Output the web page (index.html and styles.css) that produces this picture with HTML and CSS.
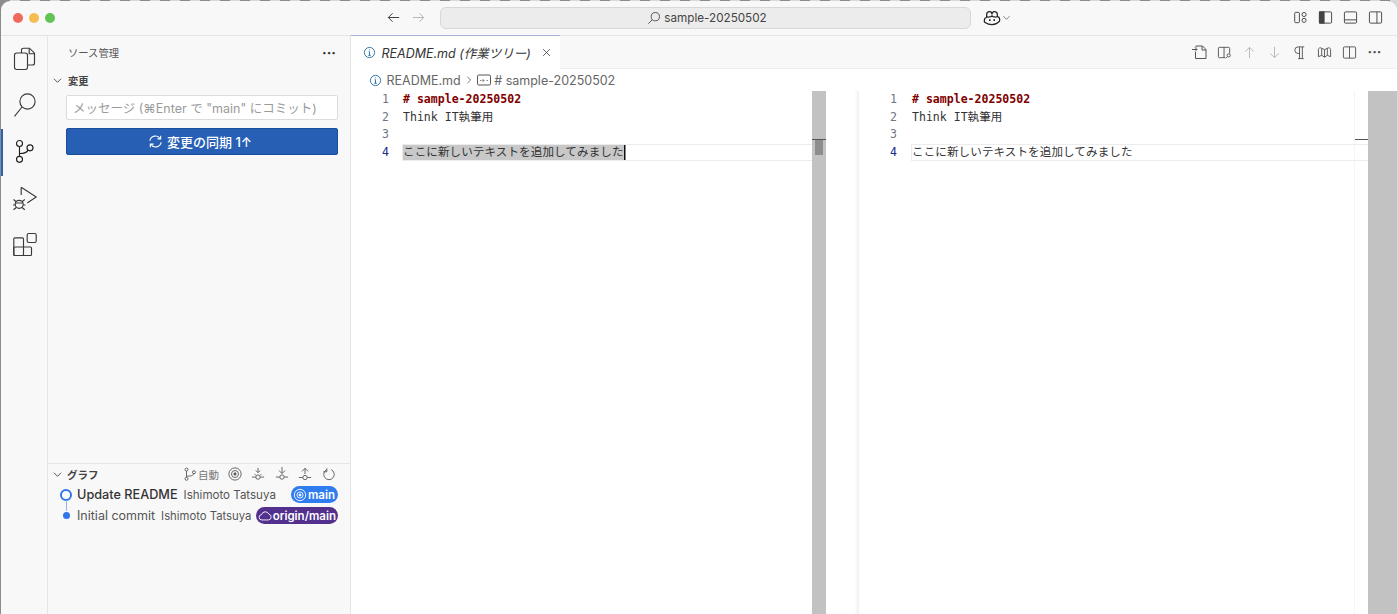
FILE: index.html
```html
<!DOCTYPE html>
<html lang="ja">
<head>
<meta charset="utf-8">
<title>sample-20250502</title>
<link rel="stylesheet" href="styles.css">
</head>
<body>
<div class="window">
  <header class="titlebar">
    <div class="lights"><i class="light red"></i><i class="light yellow"></i><i class="light green"></i></div>
    <div class="nav">
      <svg class="ic16" viewBox="0 0 16 16"><path d="M14 8H2.500M7 3.500 2.500 8 7 12.500"/></svg>
      <svg class="ic16 dim" viewBox="0 0 16 16"><path d="M2 8h11.500M9 3.500 13.500 8 9 12.500"/></svg>
    </div>
    <div class="command">
      <svg class="ic14" viewBox="0 0 16 16"><circle cx="9.500" cy="6.500" r="4.700"/><path d="M6 10 1.500 14.500"/></svg>
      <span>sample-20250502</span>
    </div>
    <div class="copilot">
      <svg class="ic-cop" viewBox="0 0 20 18"><path d="M4 5.200c0-2.200 1.600-3.400 3.300-3.400S10 3 10 5c0-2 1-3.200 2.700-3.200S16 3 16 5.200v2c1.600.6 2.600 1.600 2.600 3v1.600c0 .6-.3 1-.8 1.300C15.500 15.600 12.800 16.500 10 16.500s-5.500-.9-7.800-2.400c-.5-.3-.8-.7-.8-1.300v-1.600c0-1.400 1-2.400 2.600-3Z"/><path d="M4 7.200c1.500 1 4.700 1 6-.7 1.300 1.700 4.500 1.700 6 .7"/><path class="fat" d="M7.500 10.500v2M12.500 10.500v2"/></svg>
      <svg class="chev" viewBox="0 0 10 10"><path d="M1.500 3.500 5 7l3.500-3.500"/></svg>
    </div>
    <div class="layout-icons">
      <svg class="ic16" viewBox="0 0 16 16"><rect x="1.800" y="2.500" width="5" height="11" rx="1"/><circle cx="11.800" cy="4.800" r="2.200"/><circle cx="11.800" cy="11" r="2.200"/></svg>
      <svg class="ic16" viewBox="0 0 16 16"><rect x="1.500" y="2" width="13" height="12" rx="1.200"/><rect class="solid" x="1.500" y="2" width="5" height="12"/></svg>
      <svg class="ic16" viewBox="0 0 16 16"><rect x="1.500" y="2" width="13" height="12" rx="1.200"/><path d="M1.500 10.500h13"/></svg>
      <svg class="ic16" viewBox="0 0 16 16"><rect x="1.500" y="2" width="13" height="12" rx="1.200"/><path d="M9.500 2v12"/></svg>
    </div>
  </header>
  <div class="main">
    <nav class="activity">
      <div class="act">
        <svg viewBox="0 0 24 24"><path d="M9.500 6V3.200c0-1.200.8-2 2-2h6l5 5v9.800c0 1.200-.8 2-2 2h-5.500"/><path d="M17.200 1.500v5.200h5"/><rect x="2.500" y="6" width="13" height="16.500" rx="2.200"/></svg>
      </div>
      <div class="act">
        <svg viewBox="0 0 24 24"><circle cx="15.500" cy="7.500" r="7.600"/><path d="M10 13 2.500 22.300"/></svg>
      </div>
      <div class="act active">
        <svg viewBox="0 0 24 24"><circle cx="7.500" cy="3.500" r="3"/><circle cx="18" cy="7.800" r="3"/><circle cx="7.500" cy="19.300" r="3"/><path d="M7.500 6.500v9.800M7.500 13.500c4 0 7.500-.2 8.500-3.500"/></svg>
      </div>
      <div class="act">
        <svg viewBox="0 0 24 24"><path d="M9.200.3V8M9.200.3 24.200 10l-9 6"/><circle class="bug" cx="7.200" cy="17.300" r="4"/><path d="M1.500 12.500l2.800 2.200M12.800 12.500l-2.800 2.200M1 18h2.200M11.200 18h2.300M1.500 22.800l2.800-2.300M12.800 22.800 10 20.500M3.500 16h7.400"/></svg>
      </div>
      <div class="act">
        <svg viewBox="0 0 24 24"><rect x="1.800" y="4.800" width="9.700" height="17.700" rx="1"/><rect x="1.800" y="14" width="17.700" height="8.500" rx="1"/><rect x="15.200" y=".5" width="9" height="9" rx="1.500"/></svg>
      </div>
    </nav>
    <aside class="sidebar">
      <div class="side-top">
        <div class="side-title"><span>ソース管理</span><b class="dots">···</b></div>
        <div class="section-head"><svg class="chev" viewBox="0 0 10 10"><path d="M1 3l4 4 4-4"/></svg><span>変更</span></div>
        <div class="msg">メッセージ (⌘Enter で "main" にコミット)</div>
        <button class="sync">
          <svg viewBox="0 0 16 16"><path d="M2 7.200A6 6 0 0 1 13 5M14 8.800A6 6 0 0 1 3 11"/><path d="M13.500 1.800V5.200H10M2.500 14.200V10.800H6"/></svg>
          <span>変更の同期 1↑</span>
        </button>
      </div>
      <div class="graph">
        <div class="graph-head">
          <svg class="chev" viewBox="0 0 10 10"><path d="M1 3l4 4 4-4"/></svg>
          <span class="graph-title">グラフ</span>
          <div class="graph-tools">
            <svg class="ic14" viewBox="0 0 16 16"><circle cx="4" cy="3" r="1.700"/><circle cx="4" cy="13.500" r="1.700"/><circle cx="12.500" cy="6" r="1.700"/><path d="M4 4.700v7M4 10.500c4 0 8-.5 8.500-3"/></svg>
            <span class="auto">自動</span>
            <svg class="ic14" viewBox="0 0 16 16"><circle cx="8" cy="8" r="7"/><circle cx="8" cy="8" r="4"/><circle class="solid" cx="8" cy="8" r="1.300"/></svg>
            <svg class="ic14" viewBox="0 0 16 16"><circle cx="8" cy="11.500" r="2.500"/><path d="M1 11.500h4.500M10.500 11.500H15M8 1v5M5.500 4 8 6.500 10.500 4M4 8l1.500 1.500M12 8l-1.500 1.500"/></svg>
            <svg class="ic14" viewBox="0 0 16 16"><circle cx="8" cy="11.500" r="2.500"/><path d="M1 11.500h4.500M10.500 11.500H15M8 0v7M4.500 4 8 7.500 11.500 4"/></svg>
            <svg class="ic14" viewBox="0 0 16 16"><circle cx="8" cy="12" r="2.500"/><path d="M1 12h4.500M10.500 12H15M8 8V1.500M4.500 5 8 1.500 11.500 5"/></svg>
            <svg class="ic14" viewBox="0 0 16 16"><path d="M10.500 2.500a6 6 0 1 1-5 0M5.500 1v4H1.500" transform="translate(0 .5)"/></svg>
          </div>
        </div>
        <div class="commit head">
          <i class="node big"></i>
          <span class="c-msg">Update README</span>
          <span class="c-author">Ishimoto Tatsuya</span>
          <span class="badge blue"><svg viewBox="0 0 16 16"><circle cx="8" cy="8" r="6.500"/><circle cx="8" cy="8" r="3.500"/><circle class="solid" cx="8" cy="8" r="1.200"/></svg>main</span>
        </div>
        <div class="commit">
          <i class="node small"></i>
          <span class="c-msg">Initial commit</span>
          <span class="c-author">Ishimoto Tatsuya</span>
          <span class="badge purple"><svg viewBox="0 0 16 16"><path d="M4.500 12.500a3 3 0 0 1-.5-6 4.500 4.500 0 0 1 8.500-.5 3.300 3.300 0 0 1-.5 6.500Z"/></svg>origin/main</span>
        </div>
      </div>
    </aside>
    <section class="editor-area">
      <div class="tabs">
        <div class="tab">
          <svg class="info" viewBox="0 0 16 16"><circle cx="8" cy="8" r="6.300"/><path d="M8 7v4.500M6.500 11.500h3M7 7h1"/><path class="dotline" d="M8 4.300v.8"/></svg>
          <span>README.md (作業ツリー)</span>
          <svg class="close" viewBox="0 0 12 12"><path d="M1.500 1.500l9 9M10.500 1.500l-9 9"/></svg>
        </div>
        <div class="tab-actions">
          <svg class="ic16 wide16" viewBox="0 0 16 16"><path d="M5 3.500V2h6.500L15 5.500V14.500H4.500V8M11 2v4h4M1 5.500h5l-2-2M6 5.500l-2 2"/></svg>
          <svg class="ic16" viewBox="0 0 16 16"><path d="M9 13.500H2.500a1 1 0 0 1-1-1v-9a1 1 0 0 1 1-1h10a1 1 0 0 1 1 1V9M7.500 2.500v11"/><circle cx="12.500" cy="11" r="1.700"/><path d="M11.200 12.300 9.500 14"/></svg>
          <svg class="ic16 dim" viewBox="0 0 16 16"><path d="M8 14V2.500M3.500 7 8 2.500 12.500 7"/></svg>
          <svg class="ic16 dim" viewBox="0 0 16 16"><path d="M8 2v11.500M3.500 9 8 13.500 12.500 9"/></svg>
          <svg class="ic16" viewBox="0 0 16 16"><path d="M13 2H6.500a3.500 3.500 0 0 0 0 7H8M8 2v12.500M11 2v12.500M6.500 14.500h6"/></svg>
          <svg class="ic16" viewBox="0 0 16 16"><path d="M1.500 5c0-2 2-2.500 3.500-1.500L8 5l3-1.500c1.500-1 3.500-.5 3.500 1.500v7.500L11 11l-3 2-3-2-3.500 1.500ZM5 3.500V11M8 5v8M11 3.500V11"/></svg>
          <svg class="ic16" viewBox="0 0 16 16"><rect x="1.500" y="2" width="13" height="12" rx="1.200"/><path d="M8 2v12"/></svg>
          <b class="dots small">···</b>
        </div>
      </div>
      <div class="breadcrumb">
        <svg class="info" viewBox="0 0 16 16"><circle cx="8" cy="8" r="6.300"/><path d="M8 7v4.500M6.500 11.500h3M7 7h1"/><path class="dotline" d="M8 4.300v.8"/></svg>
        <span>README.md</span>
        <svg class="crumb-sep" viewBox="0 0 10 10"><path d="M3 1l4 4-4 4"/></svg>
        <svg class="abc" viewBox="0 0 14 12"><rect x=".5" y="1" width="13" height="10" rx="1.200"/><path class="fine" d="M3 6.500h1.500M6 5v3M6 6.500h1.500M9.500 6.500h1.500"/></svg>
        <span># sample-20250502</span>
      </div>
      <div class="diff">
        <div class="pane pane-left">
          <div class="code">
            <div class="line"><span class="ln">1</span><span class="tx h1"># sample-20250502</span></div>
            <div class="line"><span class="ln">2</span><span class="tx">Think IT執筆用</span></div>
            <div class="line"><span class="ln">3</span><span class="tx"></span></div>
            <div class="line cur"><span class="ln">4</span><span class="tx"><mark class="sel">ここに新しいテキストを追加してみました</mark></span></div>
          </div>
          <div class="scroll"><i class="ov-line"></i><i class="ov-thumb"></i></div>
        </div>
        <div class="sash"></div>
        <div class="pane pane-right">
          <div class="code">
            <div class="line"><span class="ln">1</span><span class="tx h1"># sample-20250502</span></div>
            <div class="line"><span class="ln">2</span><span class="tx">Think IT執筆用</span></div>
            <div class="line"><span class="ln">3</span><span class="tx"></span></div>
            <div class="line cur"><span class="ln">4</span><span class="tx">ここに新しいテキストを追加してみました</span></div>
          </div>
          <div class="overview"><i class="ov-line"></i></div>
          <div class="scroll wide"></div>
        </div>
      </div>
    </section>
  </div>
</div>
</body>
</html>
```
FILE: styles.css
```css
* { box-sizing: border-box; }
html, body { margin: 0; height: 100%; overflow: hidden; }
body {
  background: repeating-linear-gradient(90deg, #8c8c8c 0 10px, #d8d8d8 10px 20px);
  padding: 1px 1.500px 0 1px;
  font-family: Inter, "Noto Sans CJK JP", sans-serif;
  color: #3b3b3b;
}
svg { fill: none; stroke: currentColor; stroke-width: 1; flex: none; display: block; overflow: visible; }
svg .solid { fill: currentColor; }
.window {
  height: 613px;
  background: #f8f8f8;
  border-radius: 9px 9px 0 0;
  overflow: hidden;
  display: flex;
  flex-direction: column;
}
.titlebar {
  height: 35px;
  flex: none;
  display: flex;
  align-items: center;
  border-bottom: 1px solid #e5e5e5;
  padding: 0 0 1px 12px;
}
.lights { display: flex; gap: 6px; width: 373px; flex: none; }
.light { width: 10px; height: 10px; border-radius: 50%; }
.red { background: #ee6a5f; }
.yellow { background: #f5bd4f; }
.green { background: #61c454; }
.nav { display: flex; gap: 10px; width: 54px; flex: none; color: #333; }
.ic16 { width: 15px; height: 15px; }
.ic14 { width: 14px; height: 14px; }
.dim { color: #b3b3b3; }
.command {
  width: 531px;
  height: 22px;
  flex: none;
  border: 1px solid #d8d8d8;
  border-radius: 6px;
  background: #ececec;
  display: flex;
  align-items: center;
  justify-content: center;
  gap: 3px;
  font-size: 11.700px;
  color: #444;
  padding-left: 3px;
}
.copilot { margin-left: 12px; display: flex; align-items: center; gap: 1px; color: #222; }
.ic-cop { width: 18px; height: 16px; stroke-width: 1.400; }
.ic-cop .fat { stroke-width: 1.800; }
.copilot .chev { width: 9px; height: 9px; color: #777; }
.layout-icons { margin-left: auto; margin-right: 14px; display: flex; gap: 10px; color: #444; }
.main { flex: 1; display: flex; min-height: 0; }
.activity { width: 46px; flex: none; }
.act {
  height: 46.500px;
  display: flex;
  align-items: center;
  justify-content: center;
  color: #3a3a3a;
}
.act svg { width: 24px; height: 24px; stroke-width: 1.150; }
.act.active { box-shadow: inset 2px 0 0 #2a62b4; color: #1f1f1f; }
.sidebar {
  width: 304px;
  flex: none;
  border-left: 1px solid #e5e5e5;
  border-right: 1px solid #e5e5e5;
  display: flex;
  flex-direction: column;
  justify-content: space-between;
}
.side-title {
  height: 33px;
  display: flex;
  align-items: center;
  justify-content: space-between;
  padding: 0 14px 0 20px;
  font-size: 10.300px;
  color: #555;
}
.dots { font-weight: 700; font-size: 14px; color: #333; line-height: 1; }
.dots.small { color: #555; }
.section-head {
  height: 22px;
  display: flex;
  align-items: center;
  gap: 6px;
  padding-left: 5px;
  font-size: 10.300px;
  font-weight: 600;
  color: #444;
}
.chev { width: 9px; height: 9px; }
.msg {
  margin: 4px 12px 0 18px;
  height: 25px;
  border: 1px solid #dcdcdc;
  border-radius: 2px;
  background: #fff;
  font-size: 12.500px;
  color: #9a9a9a;
  display: flex;
  align-items: center;
  padding-left: 6px;
  white-space: nowrap;
}
.sync {
  margin: 8px 12px 0 18px;
  width: 272px;
  height: 27px;
  background: #275fb5;
  border: 1px solid #1a4d9c;
  border-radius: 2px;
  color: #fff;
  font: 500 13px Inter, "Noto Sans CJK JP", sans-serif;
  display: flex;
  align-items: center;
  justify-content: center;
  gap: 4px;
  padding: 0 4px 0 0;
}
.sync svg { width: 15px; height: 15px; stroke-width: 1.200; }
.graph { height: 151px; border-top: 1px solid #e5e5e5; flex: none; }
.graph-head {
  height: 20px;
  display: flex;
  align-items: center;
  padding: 0 14.500px 0 5px;
  gap: 5px;
  font-size: 10.500px;
  color: #444;
}
.graph-title { font-weight: 600; }
.graph-tools { margin-left: auto; display: flex; align-items: center; gap: 9.500px; color: #555; }
.auto { font-size: 10.500px; color: #777; margin-left: -8px; margin-right: -1px; }
.commit {
  height: 21px;
  display: flex;
  align-items: center;
  padding: 0 12px;
  font-size: 12.500px;
  color: #555;
  white-space: nowrap;
  position: relative;
}
.node { flex: none; display: block; }
.node.big { width: 12px; height: 12px; border: 2px solid #2f74e8; border-radius: 50%; background: #fff; margin-right: 5px; }
.node.small { width: 7px; height: 7px; background: #2f74e8; border-radius: 50%; margin: 0 7px 0 3px; }
.node.small::before {
  content: "";
  position: absolute;
  left: 17.500px;
  top: -5px;
  height: 11px;
  width: 1px;
  background: #8fb6f2;
}
.commit.head .c-msg { font-weight: 500; font-size: 12.700px; color: #333; }
.c-author { font-size: 11.300px; margin-left: 6px; color: #555; }
.commit.head .c-author { font-size: 11.550px; }
.badge {
  margin-left: auto;
  height: 17px;
  border-radius: 9px;
  display: flex;
  align-items: center;
  gap: 1px;
  padding: 0 2px;
  color: #fff;
  font-size: 11.500px;
  font-weight: 600;
}
.badge svg { width: 14px; height: 14px; }
.blue { background: #2f7cf0; padding-right: 3px; }
.purple { background: #53308d; }
.editor-area { flex: 1; min-width: 0; display: flex; flex-direction: column; background: #fff; }
.tabs {
  height: 33px;
  flex: none;
  background: #f8f8f8;
  display: flex;
  justify-content: space-between;
  border-bottom: 1px solid #ededed;
}
.tab {
  width: 209px;
  background: #fff;
  border-top: 1px solid #9fb4d6;
  margin-top: -1px;
  height: 34px;
  display: flex;
  align-items: center;
  padding-left: 11.500px;
  font-size: 12.500px;
  font-style: italic;
  color: #333;
  white-space: nowrap;
}
.tab > span { margin-left: 6px; }
.tab .close { width: 9px; height: 9px; margin-left: 11px; color: #333; }
.info { width: 13px; height: 13px; color: #2f75a8; stroke-width: 1.200; }
.dotline { stroke-width: 1.300; }
.tab-actions { display: flex; align-items: center; gap: 10px; padding-right: 15px; color: #555; }
.wide16 { width: 16px; height: 16px; }
.breadcrumb {
  height: 22px;
  flex: none;
  display: flex;
  align-items: center;
  padding-left: 18px;
  font-size: 12.500px;
  color: #666;
  gap: 4.500px;
}
.crumb-sep { width: 8px; height: 8px; color: #555; }
.abc { width: 14px; height: 12px; margin-left: -1px; margin-right: -1px; color: #555; }
.fine { stroke-width: .7; }
.diff { flex: 1; display: flex; min-height: 0; }
.pane { display: flex; min-width: 0; }
.pane-left { width: 475px; flex: none; }
.sash { width: 33px; flex: none; box-shadow: inset -4px 0 4px -3px #e8e8e8; }
.pane-right { flex: 1; }
.code { flex: 1; min-width: 0; font: 11.550px/17.500px "DejaVu Sans Mono", "Noto Sans CJK JP", monospace; color: #333; }
.line { height: 17.500px; display: flex; white-space: nowrap; }
.ln { width: 38px; flex: none; text-align: right; color: #6e7681; }
.tx { margin-left: 14px; flex: 1; min-width: 0; }
.pane-right .tx { margin-left: 15px; }
.h1 { color: #800000; font-weight: 700; }
.cur .ln { color: #1a2a8a; }
.cur .tx {
  border: 1px solid #ececec;
  border-right: 0;
  line-height: 15.500px;
  letter-spacing: .1px;
  margin-left: 13px;
}
.pane-right .cur .tx { margin-left: 14px; margin-right: -14px; }
.sel {
  background: #c8c8c8;
  color: #333;
  box-shadow: 1.500px 0 0 #111;
  display: inline-block;
  height: 15.500px;
}
.scroll { width: 14px; flex: none; background: #c2c2c2; position: relative; }
.scroll.wide { width: 29px; }
.overview { width: 14px; flex: none; border-left: 1px solid #f4f4f4; position: relative; }
.ov-line { position: absolute; top: 48px; left: 0; right: 0; height: 1px; background: #555; }
.ov-thumb { position: absolute; top: 49px; left: 3px; width: 8px; height: 15px; background: #8d8d8d; }
```
